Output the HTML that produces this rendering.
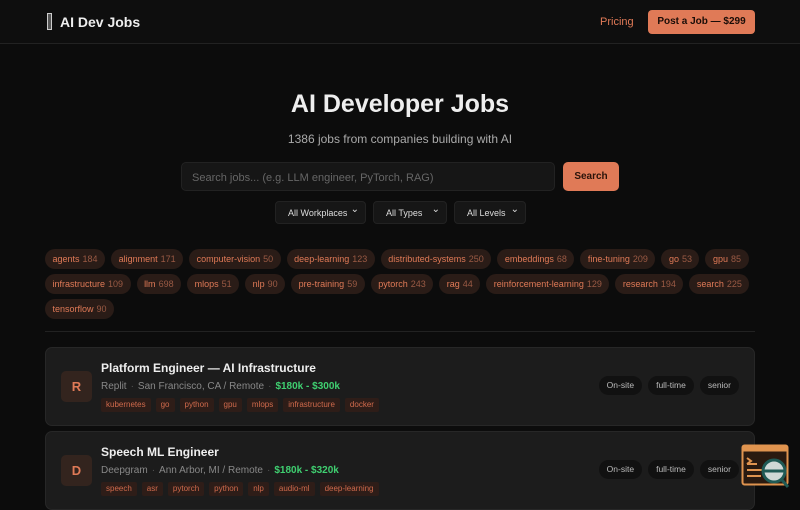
<!DOCTYPE html>
<html><head><style>
*{margin:0;padding:0;box-sizing:border-box}
body{width:800px;height:500px;overflow:hidden;background:#0c0c0c;font-family:"Liberation Sans",sans-serif;color:#eee;position:relative}
.hdr{position:absolute;left:0;top:0;width:800px;height:44px;border-bottom:1px solid #222;background:#0e0e0e}
.logo{position:absolute;left:47px;top:13px;width:5px;height:17px;border:1px solid #ccc;background:#555}
.brand{position:absolute;left:60px;top:14px;font-size:14px;font-weight:bold;color:#eee}
.pricing{position:absolute;left:600px;top:16px;font-size:11px;color:#e07a57}
.post{position:absolute;left:648px;top:10px;width:107px;height:24px;background:#e07a57;border-radius:4px;color:#1a0d08;font-size:10px;font-weight:bold;text-align:center;line-height:24px}
h1{position:absolute;top:90px;width:800px;text-align:center;font-size:25px;font-weight:bold;color:#eee}
.sub{position:absolute;top:132px;width:800px;text-align:center;font-size:12px;color:#aaa}
.search{position:absolute;left:181px;top:162px;width:374px;height:29px;background:#161616;border:1px solid #222;border-radius:5px;font-size:11px;color:#666;padding:9px 10px}
.sbtn{position:absolute;left:563px;top:162px;width:56px;height:29px;background:#e07a57;border-radius:5px;color:#2a130a;font-size:10px;font-weight:bold;text-align:center;line-height:30px}
.sel{position:absolute;top:201px;height:23px;background:#161616;border:1px solid #222;border-radius:4px;font-size:9px;color:#ddd;line-height:22px;padding-left:12px}
.sel:after{content:"⌄";position:absolute;right:6px;top:-3px;font-size:10px}
.tags{position:absolute;left:45px;top:249px;width:720px;display:flex;flex-wrap:wrap;gap:5px 6px}
.t{height:20px;border-radius:10px;background:#2a1c17;color:#e07a57;font-size:9px;line-height:20px;padding:0 7.5px}
.t i{font-style:normal;color:#9a5a44;margin-left:3px}
.hr{position:absolute;left:45px;top:331px;width:710px;height:1px;background:#222}
.card{position:absolute;left:45px;width:710px;height:79px;background:#1c1c1c;border:1px solid #272727;border-radius:7px}
.av{position:absolute;left:15px;top:23px;width:31px;height:31px;background:#33241e;border-radius:5px;color:#e07a57;font-weight:bold;font-size:13px;text-align:center;line-height:31px}
.ti{position:absolute;left:55px;top:13px;font-size:12px;font-weight:bold;color:#eee}
.me{position:absolute;left:55px;top:33px;font-size:10px;color:#888;white-space:nowrap}
.me b{color:#3fcf70;font-weight:bold}
.me s{text-decoration:none;color:#555;margin:0 4px}
.st{position:absolute;left:55px;top:50px;display:flex;gap:5px}
.st span{height:14px;background:#2e1d18;color:#d06a4c;font-size:8px;line-height:14px;padding:0 5px;border-radius:2px}
.bd{position:absolute;right:15px;top:28px;display:flex;gap:6px}
.bd span{height:19px;background:#111;border-radius:10px;color:#bbb;font-size:8.5px;line-height:19px;padding:0 8px}
</style></head><body>
<div class="hdr"><div class="logo"></div><div class="brand">AI Dev Jobs</div><div class="pricing">Pricing</div><div class="post">Post a Job — $299</div></div>
<h1>AI Developer Jobs</h1>
<div class="sub">1386 jobs from companies building with AI</div>
<div class="search">Search jobs... (e.g. LLM engineer, PyTorch, RAG)</div>
<div class="sbtn">Search</div>
<div class="sel" style="left:275px;width:91px">All Workplaces</div>
<div class="sel" style="left:373px;width:74px">All Types</div>
<div class="sel" style="left:454px;width:72px">All Levels</div>
<div class="tags">
<span class="t">agents<i>184</i></span><span class="t">alignment<i>171</i></span><span class="t">computer-vision<i>50</i></span><span class="t">deep-learning<i>123</i></span><span class="t">distributed-systems<i>250</i></span><span class="t">embeddings<i>68</i></span><span class="t">fine-tuning<i>209</i></span><span class="t">go<i>53</i></span><span class="t">gpu<i>85</i></span>
<span class="t">infrastructure<i>109</i></span><span class="t">llm<i>698</i></span><span class="t">mlops<i>51</i></span><span class="t">nlp<i>90</i></span><span class="t">pre-training<i>59</i></span><span class="t">pytorch<i>243</i></span><span class="t">rag<i>44</i></span><span class="t">reinforcement-learning<i>129</i></span><span class="t">research<i>194</i></span><span class="t">search<i>225</i></span>
<span class="t">tensorflow<i>90</i></span>
</div>
<div class="hr"></div>
<div class="card" style="top:347px"><div class="av">R</div><div class="ti">Platform Engineer — AI Infrastructure</div>
<div class="me">Replit<s>·</s>San Francisco, CA / Remote<s>·</s><b>$180k - $300k</b></div>
<div class="st"><span>kubernetes</span><span>go</span><span>python</span><span>gpu</span><span>mlops</span><span>infrastructure</span><span>docker</span></div>
<div class="bd"><span>On-site</span><span>full-time</span><span>senior</span></div></div>
<div class="card" style="top:431px"><div class="av">D</div><div class="ti">Speech ML Engineer</div>
<div class="me">Deepgram<s>·</s>Ann Arbor, MI / Remote<s>·</s><b>$180k - $320k</b></div>
<div class="st"><span>speech</span><span>asr</span><span>pytorch</span><span>python</span><span>nlp</span><span>audio-ml</span><span>deep-learning</span></div>
<div class="bd"><span>On-site</span><span>full-time</span><span>senior</span></div></div>
<svg style="position:absolute;left:741px;top:444px" width="50" height="46" viewBox="0 0 50 46">
<rect x="1.5" y="1.5" width="45" height="39" rx="2" fill="#2a1a10" stroke="#e0944f" stroke-width="2"/>
<rect x="1.5" y="1.5" width="45" height="6" fill="#e0944f"/>
<path d="M6 20h10M6 26h18M6 32h14M6 14l4 3-4 3" stroke="#e0944f" stroke-width="2" fill="none"/>
<circle cx="33" cy="27" r="11" fill="#cfd8d6" stroke="#1f5a55" stroke-width="3"/>
<path d="M23 27h20M41 36l6 7" stroke="#1f5a55" stroke-width="3"/>
</svg>
</body></html>
